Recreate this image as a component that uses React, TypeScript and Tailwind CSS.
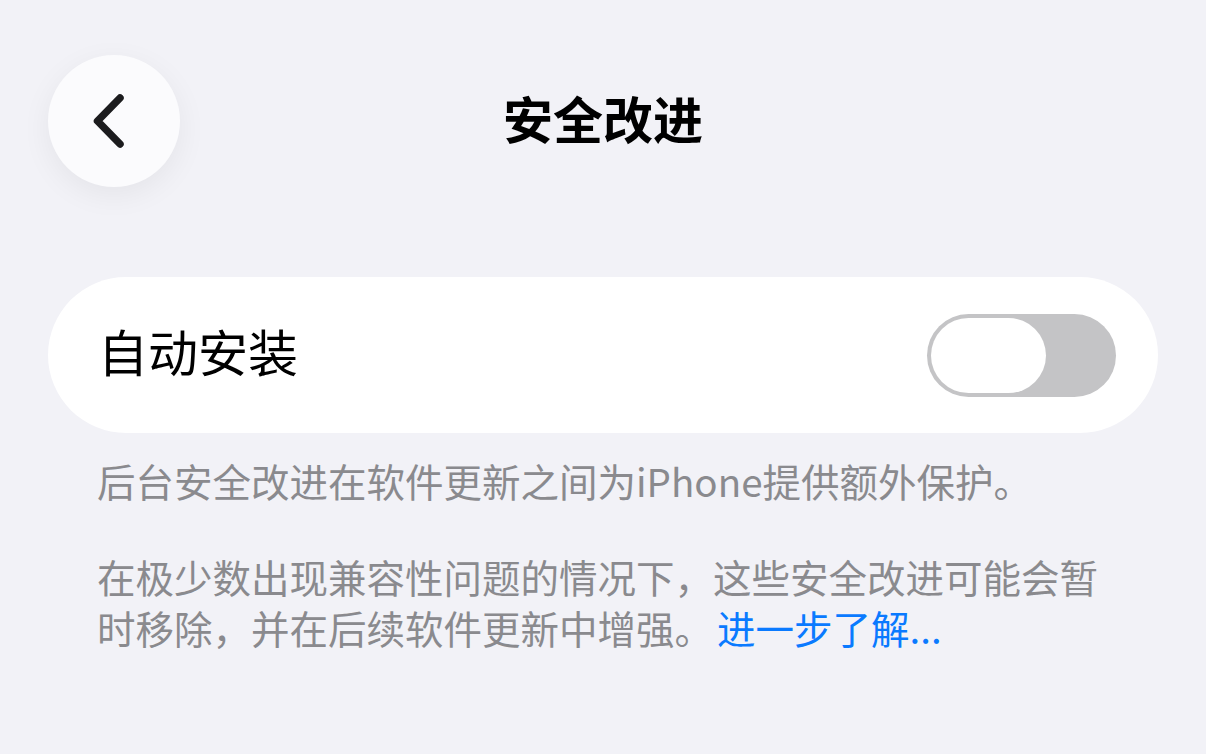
import React from "react";

const font = { fontFamily: '"Noto Sans CJK SC", "Noto Sans", sans-serif' };

export default function App() {
  return (
    <div
      className="w-[1206px] h-[754px] bg-[#f2f2f7] overflow-hidden flex flex-col"
      style={font}
    >
      <div className="relative flex items-center justify-center h-[132px] mt-[55px]">
        <button className="absolute left-[48px] top-0 w-[132px] h-[132px] rounded-full bg-[#fbfbfd] flex items-center justify-center shadow-[0_8px_30px_rgba(0,0,0,0.06)]">
          <svg width="44" height="64" viewBox="0 0 44 64" fill="none" className="-ml-[6px]">
            <path
              d="M31 9 L8.5 32 L31 55"
              stroke="#1c1c1e"
              strokeWidth="7.5"
              strokeLinecap="round"
              strokeLinejoin="round"
            />
          </svg>
        </button>
        <h1 className="text-[50px] font-semibold text-black leading-none pb-[9px]">安全改进</h1>
      </div>

      <div className="mx-[48px] mt-[90px] h-[156px] rounded-full bg-white flex items-center justify-between pl-[50px] pr-[42px]">
        <span className="text-[50px] text-black leading-none pb-[10px]">自动安装</span>
        <div className="w-[189px] h-[83px] rounded-full bg-[#c4c4c6] p-[4px] flex items-center">
          <div className="w-[115px] h-[75px] rounded-full bg-white"></div>
        </div>
      </div>

      <div className="pl-[97px] pr-[100px] mt-[22px] text-[38.5px] leading-[51px] text-[#8a8a8e]">
        <p>后台安全改进在软件更新之间为iPhone提供额外保护。</p>
        <div className="mt-[45px]">
          <p>在极少数出现兼容性问题的情况下，这些安全改进可能会暂</p>
          <div className="flex items-baseline">
            <span>时移除，并在后续软件更新中增强。</span>
            <span className="text-[#0a7aff] ml-[4px]">进一步了解...</span>
          </div>
        </div>
      </div>
    </div>
  );
}
